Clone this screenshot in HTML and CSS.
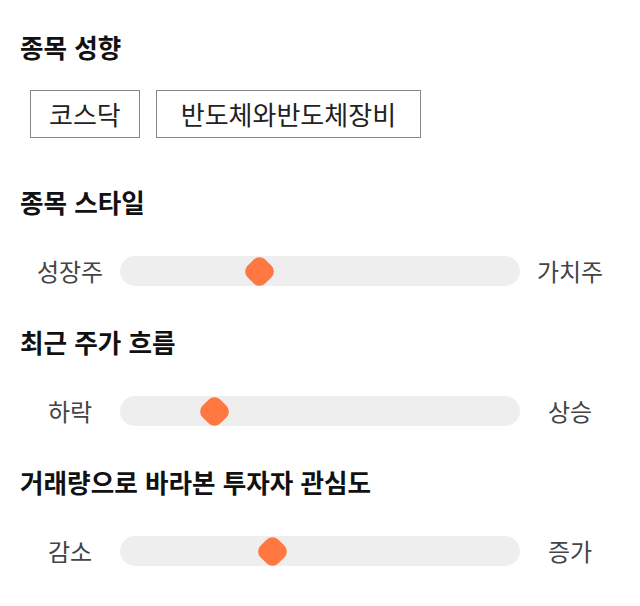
FILE: index.html
```html
<!DOCTYPE html>
<html lang="ko">
<head>
<meta charset="utf-8">
<link rel="stylesheet" href="styles.css">
</head>
<body>
<main class="page">
  <section class="section section-tags">
    <h2 class="section-title">종목 성향</h2>
    <div class="tags">
      <span class="tag">코스닥</span>
      <span class="tag tag-wide">반도체와반도체장비</span>
    </div>
  </section>
  <section class="section">
    <h2 class="section-title">종목 스타일</h2>
    <div class="slider-row">
      <span class="label">성장주</span>
      <div class="track"><span class="thumb" style="left:34.75%"></span></div>
      <span class="label">가치주</span>
    </div>
  </section>
  <section class="section">
    <h2 class="section-title">최근 주가 흐름</h2>
    <div class="slider-row">
      <span class="label">하락</span>
      <div class="track"><span class="thumb" style="left:23.7%"></span></div>
      <span class="label">상승</span>
    </div>
  </section>
  <section class="section">
    <h2 class="section-title">거래량으로 바라본 투자자 관심도</h2>
    <div class="slider-row">
      <span class="label">감소</span>
      <div class="track"><span class="thumb" style="left:38.2%"></span></div>
      <span class="label">증가</span>
    </div>
  </section>
</main>
</body>
</html>
```

FILE: styles.css
```css
* { box-sizing: border-box; }
html, body {
  margin: 0;
  padding: 0;
  background: #ffffff;
}
body {
  font-family: "Noto Sans CJK KR", "Noto Sans", sans-serif;
  color: #111111;
}
.page {
  display: flex;
  flex-direction: column;
  padding: 29px 20px 0 20px;
}
.section {
  display: flex;
  flex-direction: column;
  margin-bottom: 38px;
}
.section-tags {
  margin-bottom: 46px;
}
.section-title {
  margin: 0;
  font-size: 25.6px;
  font-weight: 700;
  line-height: 36px;
  color: #111111;
}
.tags {
  display: flex;
  gap: 16px;
  margin-top: 25px;
  padding-left: 10px;
}
.tag {
  display: inline-block;
  border: 1px solid #888888;
  padding: 0 18px;
  font-size: 26px;
  line-height: 46px;
  color: #222222;
}
.tag-wide {
  padding: 0 24px;
}
.slider-row {
  display: grid;
  grid-template-columns: 100px 1fr 100px;
  align-items: center;
  margin-top: 36px;
  height: 30px;
}
.label {
  text-align: center;
  font-size: 24px;
  line-height: 30px;
  color: #444444;
}
.track {
  position: relative;
  height: 30px;
  background: #eeeeee;
  border-radius: 15px;
}
.thumb {
  position: absolute;
  top: 50%;
  width: 25px;
  height: 25px;
  margin-left: -12.5px;
  margin-top: -12.5px;
  background: #ff7841;
  border-radius: 8px;
  transform: rotate(45deg);
}
```
